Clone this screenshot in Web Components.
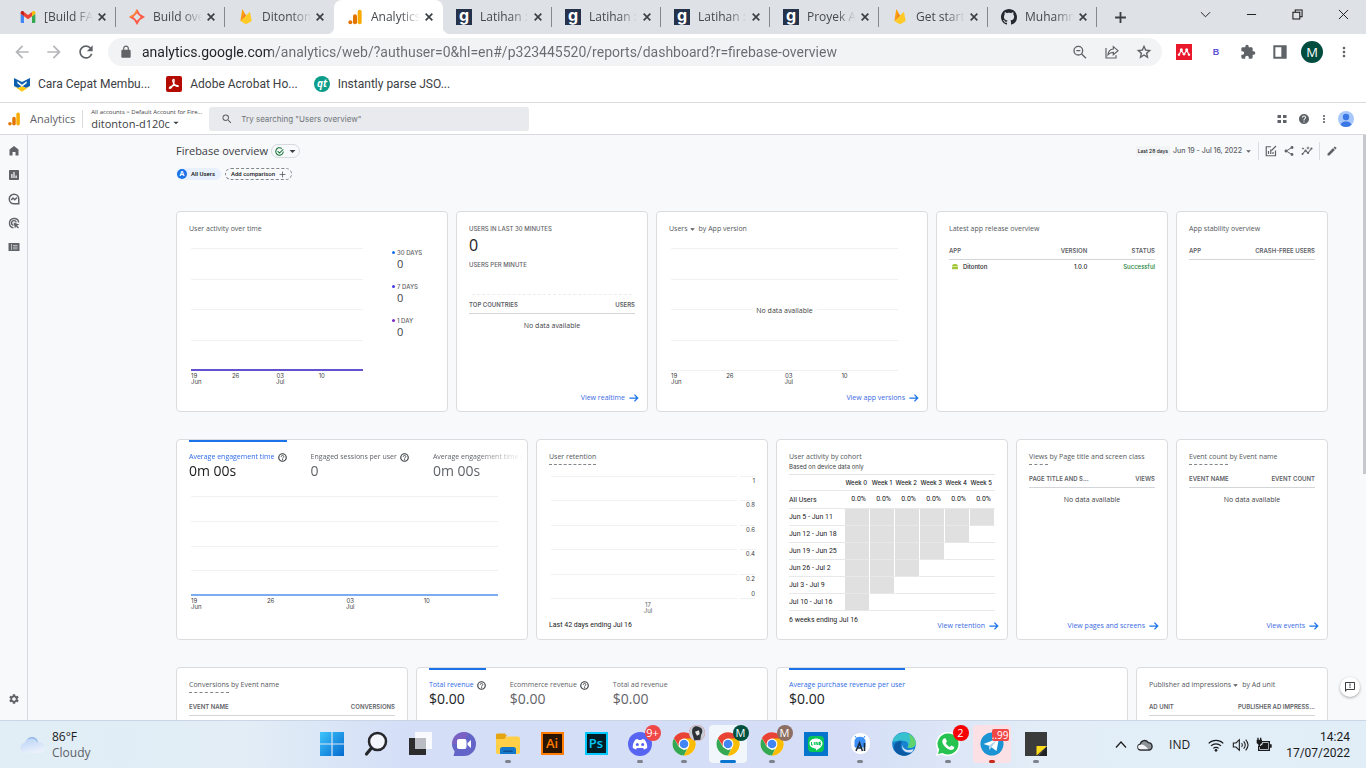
<!DOCTYPE html>
<html lang="en">
<head>
<meta charset="utf-8">
<title>Analytics</title>
<style>
  html, body { margin: 0; height: 100%; }
  body { overflow: hidden; background: #f8f9fb; color: #3c4043; font-family: "Open Sans", "Noto Sans", sans-serif; }
</style>
</head>
<body>
<desktop-shell></desktop-shell>
<script>
const define = (tag, css, html) => customElements.define(tag, class extends HTMLElement {
  constructor() { super(); this.attachShadow({ mode: 'open' }); }
  connectedCallback() {
    this.shadowRoot.innerHTML = `<style>*{box-sizing:border-box}button{font:inherit;color:inherit;background:none;border:0;padding:0;margin:0}a{color:inherit;text-decoration:none}${css}</style>` + (typeof html === 'function' ? html(this) : html);
  }
});
const attr = (el, name, fallback = '') => el.getAttribute(name) || fallback;
const P = d => `<path fill="currentColor" d="${d}"/>`;
const S = (d, w = 2) => `<path fill="none" stroke="currentColor" stroke-width="${w}" d="${d}"/>`;
const CHROME = `<circle cx="12" cy="12" r="11.500" fill="#fff"/><path fill="#e94335" d="M12 12 2 6.300A11.500 11.500 0 0 1 22 6.300z"/><path fill="#fbbc04" d="M12 12 22 6.300A11.500 11.500 0 0 1 12 23.500L17 14z"/><path fill="#34a853" d="M12 23.500A11.500 11.500 0 0 1 2 6.300L7 15l5 3 3-1z"/><path fill="#e94335" d="M12 6.500h10A11.500 11.500 0 0 0 2 6.300l5 8z"/><path fill="#fbbc04" d="M12 6.500h10.100A11.500 11.500 0 0 1 12 23.500l5-8.700z"/><circle cx="12" cy="12" r="5.400" fill="#fff"/><circle cx="12" cy="12" r="4.300" fill="#4285f4"/>`;
const FIREBASE = `<path fill="#ffa000" d="M3.500 18 6.300 1.200c.1-.5.700-.6 1-.2L10 6.300z"/><path fill="#f57f17" d="m13.800 13-3.900-7L3.500 18z"/><path fill="#ffca28" d="M20.500 18 18.100 5.200c-.1-.6-.7-.7-1-.3L3.500 18l7.600 4.400c.5.300 1.300.3 1.800 0z"/>`;
const GA = `<rect x="16" y="1" width="6" height="22" rx="3" fill="#f9ab00"/><rect x="9" y="8" width="6" height="15" rx="3" fill="#e37400"/><circle cx="5" cy="20" r="3" fill="#e37400"/>`;
const ICONS = {
  gmail: `<path fill="#4285f4" d="M1 20V7l5 3.800V21H2.500C1.700 21 1 20.600 1 20z"/><path fill="#34a853" d="M18 21V10.800L23 7v13c0 .6-.7 1-1.500 1z"/><path fill="#ea4335" d="M6 11V4.500l6 4.500 6-4.500V11l-6 4.500z"/><path fill="#c5221f" d="M1 7V5.300C1 3 3.500 2.300 5 3.400L6 4.200V11z"/><path fill="#fbbc04" d="M23 7V5.300C23 3 20.500 2.300 19 3.400l-1 .8V11z"/>`,
  dicoding: `<path fill="#ff5a45" d="m12 0 4.500 7.500L24 12l-7.500 4.500L12 24l-4.500-7.500L0 12l7.500-4.500z"/><path fill="#ff9233" d="M0 12l7.500-4.500L12 0v5L5 12z"/><path fill="#dee1e6" d="m12 6.500 5.500 5.500-5.500 5.500L6.500 12z"/>`,
  firebase: FIREBASE, ga: GA,
  github: `<g transform="scale(1.500)"><path fill="#24292f" d="M8 0C3.580 0 0 3.580 0 8c0 3.540 2.290 6.530 5.470 7.590.4.070.55-.17.55-.38 0-.19-.01-.82-.01-1.490-2.010.37-2.530-.49-2.690-.94-.09-.23-.48-.94-.82-1.130-.28-.15-.68-.52-.01-.53.63-.01 1.080.58 1.230.82.72 1.210 1.870.87 2.330.66.07-.52.28-.87.510-1.070-1.780-.2-3.640-.89-3.640-3.950 0-.87.31-1.590.82-2.150-.08-.2-.36-1.020.08-2.120 0 0 .67-.21 2.200.82.64-.18 1.320-.27 2-.27s1.360.09 2 .27c1.530-1.040 2.200-.82 2.200-.82.44 1.100.16 1.920.08 2.120.51.56.82 1.270.82 2.150 0 3.070-1.870 3.750-3.650 3.950.29.25.54.73.54 1.480 0 1.070-.01 1.930-.01 2.200 0 .21.15.46.55.38A8.010 8.010 0 0 0 16 8c0-4.420-3.580-8-8-8z"/></g>`,
  glints: `<path fill="#25324b" d="M0 0h24v24H0z"/><text x="12" y="18" text-anchor="middle" font-family="Inter" font-weight="700" font-size="24" fill="#fff">g</text>`,
  back: P('M20 11H7.830l5.590-5.590L12 4l-8 8 8 8 1.410-1.410L7.830 13H20v-2z'),
  forward: P('M12 4l-1.410 1.410L16.170 11H4v2h12.170l-5.580 5.590L12 20l8-8z'),
  reload: P('M17.650 6.350A7.958 7.958 0 0012 4c-4.420 0-7.990 3.580-7.990 8s3.570 8 7.990 8c3.730 0 6.840-2.550 7.730-6h-2.080A5.990 5.990 0 0112 18c-3.310 0-6-2.690-6-6s2.690-6 6-6c1.660 0 3.140.69 4.220 1.780L13 11h7V4l-2.350 2.350z'),
  lock: P('M18 8h-1V6c0-2.760-2.240-5-5-5S7 3.240 7 6v2H6c-1.100 0-2 .9-2 2v10c0 1.100.9 2 2 2h12c1.100 0 2-.9 2-2V10c0-1.100-.9-2-2-2zM9 6c0-1.660 1.340-3 3-3s3 1.340 3 3v2H9V6z'),
  search: P('M15.500 14h-.79l-.28-.27A6.471 6.471 0 0016 9.500 6.500 6.500 0 109.500 16c1.610 0 3.090-.59 4.230-1.570l.27.28v.79l5 4.990L20.490 19l-4.990-5zm-6 0C7.010 14 5 11.990 5 9.500S7.010 5 9.500 5 14 7.010 14 9.500 11.990 14 9.500 14z'),
  zoomout: S('M16 10a6.500 6.500 0 1 1-13 0 6.500 6.500 0 0 1 13 0zM14.500 15l6.500 6.500M6.500 10h6', 2),
  sharepage: S('M3 6v15h15v-4M14 4l7 6-7 6v-3.500c-4 0-6 1-8 3.500.5-5 3-8 8-8.500z', 1.8),
  star: P('M23 9l-7.800-.7L12 1 8.800 8.300 1 9l5.900 5.100L5.200 22 12 17.800 18.800 22l-1.700-7.900L23 9zM12 15.400l-3.760 2.270 1-4.280-3.320-2.880 4.380-.38L12 6.100l1.710 4.040 4.380.38-3.320 2.880 1 4.280L12 15.400z'),
  mendeley: `<path fill="#e9182a" d="M0 0h24v24H0z"/><g fill="#fff"><circle cx="8" cy="8.500" r="2.300"/><circle cx="16" cy="8.500" r="2.300"/><circle cx="4.500" cy="16" r="1.800"/><circle cx="12" cy="15.500" r="1.800"/><circle cx="19.500" cy="16" r="1.800"/></g><path fill="none" stroke="#fff" stroke-width="1.800" d="M4.500 16c2-1 .5-5 3.500-5s2 4 4 4.500c2-.5 1-4.500 4-4.500s1.500 4 3.500 5"/>`,
  puzzle: P('M20.500 11H19V7c0-1.100-.9-2-2-2h-4V3.500a2.500 2.500 0 00-5 0V5H4c-1.100 0-1.990.9-1.990 2v3.800H3.500c1.490 0 2.700 1.210 2.700 2.700s-1.210 2.700-2.700 2.700H2V20c0 1.100.9 2 2 2h3.800v-1.500c0-1.490 1.210-2.700 2.700-2.700s2.700 1.210 2.700 2.700V22H17c1.100 0 2-.9 2-2v-4h1.500a2.500 2.500 0 000-5z'),
  panel: P('M2 2h20v20H2zM5 5v14h9V5z').replace('<path', '<path fill-rule="evenodd"'),
  dots: P('M12 8c1.100 0 2-.9 2-2s-.9-2-2-2-2 .9-2 2 .9 2 2 2zm0 2c-1.100 0-2 .9-2 2s.9 2 2 2 2-.9 2-2-.9-2-2-2zm0 6c-1.100 0-2 .9-2 2s.9 2 2 2 2-.9 2-2-.9-2-2-2z'),
  plus: S('M12 2v20M2 12h20', 3.4), thinplus: S('M12 2v20M2 12h20', 3),
  close: S('M4 4l16 16M20 4L4 20', 4),
  wdown: S('M2 7l10 10L22 7', 2), wmin: S('M2 12h20', 2), wmax: S('M2 7h15v15H2zM7 7V2h15v15h-5', 2.2), wclose: S('M2 2l20 20M22 2L2 22', 2),
  mbook: `<path fill="#0b5fae" d="M0 3l12 6 12-6v12l-6 3-6-3-6 3-6-3z"/><path fill="#fff" d="M5 8l7 5 7-5v3l-7 5-7-5z"/><path fill="#fcc914" d="M1 16l5 2 6-2.500 6 2.500 5-2-11 7.500z"/>`,
  acrobat: `<rect width="24" height="24" rx="3" fill="#b30b00"/><path fill="none" stroke="#fff" stroke-width="1.800" d="M10.500 5.500c2-1.500 2 1 1.500 4-1 4-4 9-6 9s-1-2 3-3.500 9-1.500 9.500-.2-2.500 1.500-5-1.300-4-6.500-3-8z"/>`,
  qt: `<circle cx="12" cy="12" r="12" fill="#0b9d8a"/><text x="12" y="17" text-anchor="middle" font-family="Open Sans" font-style="italic" font-weight="700" font-size="15" fill="#fff">qt</text>`,
  caret: P('M4 8h16l-8 8z'),
  apps: P('M3 4h7v6H3zM14 4h7v6h-7zM3 14h7v6H3zM14 14h7v6h-7z'),
  helpfill: P('M12 2C6.480 2 2 6.480 2 12s4.480 10 10 10 10-4.480 10-10S17.520 2 12 2zm1 17h-2v-2h2v2zm2.070-7.750l-.9.92C13.450 12.900 13 13.500 13 15h-2v-.5c0-1.100.45-2.100 1.170-2.830l1.240-1.260c.37-.36.59-.86.59-1.410 0-1.100-.9-2-2-2s-2 .9-2 2H8c0-2.210 1.790-4 4-4s4 1.790 4 4c0 .88-.36 1.680-.93 2.250z'),
  help: `<circle cx="12" cy="12" r="10" fill="none" stroke="currentColor" stroke-width="3.200"/>` + S('M8.500 10c0-5 7-4.500 7-.5 0 2.500-3.300 2.500-3.300 5.500', 2.4) + P('M10.800 16.500h2.800v2.500h-2.800z'),
  avatar: `<clipPath id="c"><circle cx="12" cy="12" r="12"/></clipPath><g clip-path="url(#c)"><path fill="#a8c7fa" d="M0 0h24v24H0z"/><circle cx="12" cy="9" r="4.800" fill="#3b78e7"/><path fill="#3b78e7" d="M3 24c0-11 18-11 18 0z"/></g>`,
  home: P('M3 21V9l9-7 9 7v12h-6v-7H9v7z'),
  report: P('M20 2H4c-1.100 0-2 .9-2 2v16c0 1.100.9 2 2 2h16c1.100 0 2-.9 2-2V4c0-1.100-.9-2-2-2zM9 18H6.500v-8H9zm4.200 0h-2.400V6h2.400zm4.300 0H15v-5h2.500z'),
  explore: S('M12 2.500a9.500 9.500 0 1 0 0 19h9.500V12A9.500 9.500 0 0 0 12 2.500zM6.500 14l3.500-4 3.500 3.500L18 9', 3),
  target: S('M21.500 11a9.300 9.300 0 1 0-10.500 10.500M16.500 11a4.700 4.700 0 1 0-5.500 5.500', 2.8) + P('M11 11l12 4-5 2 4 4-2 2-4-4-2 4z'),
  library: P('M1 4h22v16H1z') + '<path fill="#d7d9dd" d="M6 6h1.500v12H6zM10 8h9v1.500h-9zM10 11.500h9V13h-9zM10 15h9v1.500h-9z"/>',
  gear: P('M19.140 12.940c.04-.3.060-.61.060-.94 0-.32-.02-.64-.07-.94l2.030-1.580a.49.49 0 00.12-.61l-1.920-3.320a.488.488 0 00-.59-.22l-2.390.96c-.5-.38-1.030-.7-1.620-.94l-.36-2.540a.484.484 0 00-.48-.41h-3.840c-.24 0-.43.17-.47.41l-.36 2.540c-.59.24-1.130.57-1.620.94l-2.390-.96c-.22-.08-.47 0-.59.22L2.740 8.870c-.12.21-.08.47.12.61l2.030 1.580c-.05.3-.09.63-.09.94s.02.64.07.94l-2.030 1.580a.49.49 0 00-.12.61l1.920 3.320c.12.22.37.29.59.22l2.390-.96c.5.38 1.030.7 1.620.94l.36 2.540c.05.24.24.41.48.41h3.840c.24 0 .44-.17.47-.41l.36-2.540c.59-.24 1.130-.56 1.620-.94l2.390.96c.22.080.47 0 .59-.22l1.920-3.320c.12-.22.070-.47-.12-.61l-2.010-1.580zM12 15.600c-1.980 0-3.600-1.620-3.600-3.600s1.620-3.600 3.600-3.600 3.600 1.620 3.600 3.600-1.620 3.600-3.600 3.600z'),
  check: S('M22 12a10 10 0 1 1-4-8M7 11l5 5L22 6', 2.8),
  custom: S('M21 11v10.500H2.500v-18H12M7 18v-6M11.500 18V9M16 18v-4M13 11l9-9', 2.4),
  share: P('M18 16.080c-.76 0-1.440.3-1.960.77L8.910 12.700c.05-.23.090-.46.090-.7s-.04-.47-.09-.7l7.050-4.110c.54.5 1.250.81 2.040.81 1.660 0 3-1.340 3-3s-1.340-3-3-3-3 1.340-3 3c0 .24.040.47.090.7L8.040 9.810C7.500 9.310 6.790 9 6 9c-1.660 0-3 1.340-3 3s1.340 3 3 3c.79 0 1.500-.31 2.040-.81l7.120 4.160c-.05.21-.08.43-.08.65 0 1.610 1.310 2.920 2.920 2.920s2.920-1.310 2.920-2.920-1.310-2.920-2.920-2.920z'),
  insights: S('M3 18l6-7 5 5 7-9', 2.2) + P('M3 16a2 2 0 1 0 .1 4 2 2 0 0 0 0-4zM9 9a2 2 0 1 0 .1 4A2 2 0 0 0 9 9zM14 14a2 2 0 1 0 .1 4 2 2 0 0 0 0-4zM21 5a2 2 0 1 0 .1 4 2 2 0 0 0 0-4zM14 2l1 3 3 1-3 1-1 3-1-3-3-1 3-1zM4 4l.8 2.200L7 7l-2.200.8L4 10l-.8-2.200L1 7l2.200-.8z'),
  edit: P('M3 17.250V21h3.750L17.810 9.940l-3.750-3.750L3 17.250zM20.710 7.040a1 1 0 000-1.410l-2.340-2.340a1 1 0 00-1.410 0l-1.830 1.830 3.750 3.750 1.830-1.830z'),
  arrow: S('M1 12h20M13 4l8 8-8 8', 3),
  android: '<path fill="#a4c639" d="M2 10c0-9 20-9 20 0zM2 12h20v9H2z"/>',
  feedback: P('M20 2H4c-1.100 0-1.990.9-1.990 2L2 22l4-4h14c1.100 0 2-.9 2-2V4c0-1.100-.9-2-2-2zm0 14H5.200L4 17.200V4h16v12zM11 5h2v6h-2zM11 12h2v2h-2z'),
  weather: `<defs><linearGradient id="w" x2=".4" y2="1"><stop stop-color="#b9d2f6"/><stop offset="1" stop-color="#e9f0fb"/></linearGradient></defs><circle cx="12" cy="10" r="6" fill="#86aee2"/><path fill="url(#w)" d="M5 20a5 5 0 0 1-.5-9.900A7 7 0 0 1 17.500 9.500 5.500 5.500 0 1 1 18 20z"/>`,
  windows: `<defs><linearGradient id="g" x2="1" y2="1"><stop stop-color="#3cc5fb"/><stop offset="1" stop-color="#0569cf"/></linearGradient></defs><path fill="url(#g)" d="M0 0h11.400v11.400H0zM12.600 0H24v11.400H12.600zM0 12.600h11.400V24H0zM12.600 12.600H24V24H12.600z"/>`,
  tsearch: `<path fill="#f3f6fa" stroke="#25272b" stroke-width="2.500" d="M22 9.500a8.500 8.500 0 1 1-17 0 8.500 8.500 0 0 1 17 0z"/><path stroke="#25272b" stroke-width="3.200" stroke-linecap="round" d="M7.500 16l-5 6"/>`,
  taskview: `<path fill="#2c2c2c" d="M1 6h17v17H1z"/><path fill="#fff" opacity=".85" d="M7 0h17v17H7z"/><path fill="#b9bcc2" d="M7 6h11v11H7z"/>`,
  chat: `<path fill="#6264c7" d="M12 0a12 12 0 0 1 0 24H1.500l1.200-4.500A12 12 0 0 1 12 0z"/><path fill="#8a5fc0" opacity=".6" d="M12 0A12 12 0 0 0 0 12C6 13 15 8 16 1A12 12 0 0 0 12 0z"/><rect x="5" y="7" width="9.500" height="10" rx="2" fill="#fff"/><path fill="#fff" d="M15.500 11L19 8v8l-3.500-3z"/>`,
  folder: `<path fill="#e5a513" d="M0 3c0-1 .5-1.500 1.500-1.500H9L11 4h-1v6H0z"/><path fill="#ffcf48" d="M0 7h8l3-2.500h11c1.300 0 2 .7 2 2V20c0 1.300-.7 2-2 2H2c-1.300 0-2-.7-2-2z"/><path fill="#1276c9" d="M4 22v-4.500C4 16 5 15 6.500 15h11c1.500 0 2.500 1 2.500 2.500V22z"/><path fill="#0b4f92" d="M7.500 18.500h9V20h-9z"/>`,
  ai: `<rect x="2" y="1" width="21" height="21" fill="#2a1500" stroke="#ff7c00" stroke-width="2"/><text x="12" y="16" text-anchor="middle" font-family="Open Sans" font-weight="600" font-size="13" fill="#ff7c00">Ai</text>`,
  ps: `<rect x="2" y="1" width="21" height="21" fill="#001d26" stroke="#00c8ff" stroke-width="2"/><text x="12" y="16" text-anchor="middle" font-family="Open Sans" font-weight="600" font-size="13" fill="#00c8ff">Ps</text>`,
  discord: `<circle cx="12" cy="12" r="12" fill="#5865f2"/><path fill="#fff" d="M7.500 7.500L10 7l.5 1h3l.5-1 2.500.5c2 2.500 3 5.500 2.700 8.500l-3.200 1.500-1-1.500h-6l-1 1.500L4.800 16c-.3-3 .7-6 2.700-8.500z"/><circle cx="9.300" cy="12.500" r="1.500" fill="#5865f2"/><circle cx="14.700" cy="12.500" r="1.500" fill="#5865f2"/>`,
  chrome: CHROME,
  portrait: `<circle cx="12" cy="12" r="12" fill="#c9cdd4"/><path fill="#2d3138" d="M5 13C3 3 10 0 15 3c6 1 6 8 3 12l-1 7-9 1z"/><path fill="#e8e4e2" d="M9 10l6-2 1 6-4 2z"/>`,
  line: `<path fill="#0574cd" d="M0 0h24v24H0z"/><rect x="4" y="4" width="16" height="16" rx="4" fill="#06c755"/><path fill="#fff" d="M12 6.500c4 0 6.500 2.200 6.500 5 0 3.200-4 5.500-6.500 7 .4-1.500 0-2-.8-2.100-3.200-.4-5.700-2.200-5.700-4.900 0-2.800 2.500-5 6.500-5z"/><path fill="none" stroke="#06c755" d="M7.500 10v3h1.300M10.300 10v3M12 13v-3l2 3v-3M17 10h-1.500v3H17M15.500 11.500H17"/>`,
  studio: `<rect x="3" y="1" width="19" height="21" rx="9" fill="#fff"/><path fill="#3a8ef5" d="M7 9c0-5 10-5 10 0v6H7zM7 4l2 3M17 4l-2 3" stroke="#3a8ef5"/><path fill="none" stroke="#1c2d3c" stroke-width="1.600" d="M8 19l3.500-8 3 8M16.500 11v8M9.500 16h4"/>`,
  edge: `<circle cx="12" cy="12" r="11.800" fill="#1682d0"/><path fill="#37c1ce" d="M.5 10C2-1 19-3.500 23.500 9c1.500 5.500-3.500 8.500-8 6.500 1.500-1.500 1-5.500-2.500-6.500-4-1-8-.5-12.500 1z"/><path fill="#5fd46e" d="M17 2c6 3 8.500 9 5.500 12-2 2.200-5.500 2-7 1.500 3-4 3-9 1.500-13.500z"/><path fill="#0c59a4" d="M9 12c-1.500 6 4 10.500 11 8.300C14 27 2 23 2 15c0-4 4-6.500 8-5.500-.5.700-.8 1.500-1 2.500z"/><path fill="#d8e2f7" d="M10.500 13c0 4 5 6.500 11 4-.5 2-1 2.500-2 3.200C14 21.500 9 18 10.500 13z"/>`,
  whatsapp: `<path fill="#fff" d="M12 0a12 12 0 1 1-6 22.400L0 24l1.600-6A12 12 0 0 1 12 0z"/><path fill="#26c351" d="M12 1.500a10.500 10.500 0 1 1-5.500 19.400L2 22l1.200-4.400A10.500 10.500 0 0 1 12 1.500z"/><path fill="#fff" d="M8 6.500l1.500-.2 1.500 3.200-1.200 1.600c1 2 2 3 4 3.900l1.500-1.600 3 1.600c0 2.500-2 3.200-3.700 3C10.500 17.300 6.300 12.500 6.300 9.500c0-1.500.7-2.500 1.700-3z"/>`,
  telegram: `<circle cx="12" cy="12" r="11.500" fill="#1c93d3"/><path fill="#fff" d="M3.500 12L19 6l-2.500 13-5-3.700-2.300 2.400-.2-4z"/><path fill="#a9d2ee" d="M9 13.700l8-6-5.500 7.300-2.300 2.700z"/>`,
  notes: `<path fill="#3b3b3b" d="M1 0h22v14l-9 10H1z"/><path fill="#232323" d="M14 24h9V14z"/><path fill="#ffdb1a" d="M12.500 14H23l-10.500 9.500z"/>`,
  up: S('M2 17L12 6l10 11', 2.4),
  onedrive: `<path fill="#8e9299" stroke="#26282c" stroke-width="2" d="M5.500 19.500a4.500 4.500 0 0 1-.5-8.900A6.500 6.500 0 0 1 17 8.500a5.600 5.600 0 0 1 1.500 11z"/><path fill="#f2f4f7" d="M5 18.500a3.500 3.500 0 0 1 0-7c4-1 8 2 12 7z"/>`,
  wifi: S('M1 9.500c6-6 16-6 22 0M4.500 13.300c4-4 11-4 15 0M8 17c2-2 6-2 8 0', 1.7) + '<circle cx="12" cy="20" r="2" fill="currentColor"/>',
  sound: S('M2 9h4l5-5v16l-5-5H2zM14.500 9c1.500 2 1.500 4 0 6M17.500 6.500c3 3.500 3 7.500 0 11M20.500 4c4.500 5 4.500 11 0 16', 1.6),
  battery: `<path fill="none" stroke="currentColor" stroke-width="2" d="M8 7h12v13H4v-7"/><path fill="currentColor" d="M10 9h8v9H6v-4l4-3zM21 11h2.500v5H21zM2 1h2v3h2V1h2v3h1v5l-3 3v3H4v-3L1 9V4h1z"/>`
};
define('ui-icon', `:host{display:inline-flex;flex:none;width:16px;height:16px}svg{width:100%;height:100%;display:block;overflow:visible}`,
  el => `<svg viewBox="0 0 24 24" aria-hidden="true">${ICONS[attr(el, 'name')]}</svg>`);

/* ---------- browser ---------- */
define('browser-tab', `
  :host{display:flex;flex:0 1 109px;min-width:0;height:34px;align-items:center;padding:0 9px 0 13px;position:relative;font-size:12px;color:#45484d}
  :host::after{content:"";position:absolute;right:0;top:7px;width:1px;height:20px;background:#84878c}
  :host([plain])::after{display:none}
  :host([active]){background:#fff;border-radius:8px 8px 0 0}
  :host([active])::after{display:none}
  :host([active])::before{content:"";position:absolute;left:-8px;right:-8px;bottom:0;height:8px;background:radial-gradient(circle at 0 0,transparent 8px,#fff 9px) left/8px 8px no-repeat,radial-gradient(circle at 100% 0,transparent 8px,#fff 9px) right/8px 8px no-repeat}
  .t{flex:1;min-width:0;height:18px;line-height:18px;overflow:hidden;white-space:nowrap;margin:0 4px 0 8px;text-align:left;-webkit-mask-image:linear-gradient(90deg,#000 60%,transparent)}
  .x ui-icon{width:10px;height:10px;color:#3c4043}.x{display:flex}`,
  el => `<ui-icon name="${attr(el, 'icon')}"></ui-icon><button class="t"><slot></slot></button><button class="x" aria-label="Close tab"><ui-icon name="close"></ui-icon></button>`);
define('bookmark-link', `:host{display:block;flex:none}a{display:flex;align-items:center;gap:8px;font:12px/18px Roboto;color:#3c4043}`,
  el => `<a href="#"><ui-icon name="${attr(el, 'icon')}"></ui-icon><slot></slot></a>`);
define('browser-chrome', `
  :host{display:block;background:#fff;border-bottom:1px solid #d8dade}
  .strip{display:flex;background:#dee1e6;height:34px;padding-left:7px}
  .new{width:46px;display:grid;place-items:center}.new ui-icon{width:13px;height:13px;color:#3c4043}
  .win{margin-left:auto;display:flex;height:28px;color:#111}.win button{width:46px;display:grid;place-items:center}.win ui-icon{width:11px;height:11px}
  .bar{display:flex;align-items:center;height:36px;padding:0 6px;color:#5f6368}
  .bar button{width:32px;height:32px;display:grid;place-items:center;flex:none}
  .nav ui-icon{width:20px;height:20px}.off{color:#b4b6b9}.nav{display:flex}
  .omni{flex:1;display:flex;align-items:center;height:28px;border-radius:14px;background:#f1f3f4;margin:0 6px;padding:0 2px 0 11px;min-width:0}
  .omni label{display:flex}.omni label ui-icon{width:14px;height:14px}
  input{flex:1;min-width:0;border:0;padding:0 0 0 9px;height:24px;font:14px Roboto;color:#55585c;-webkit-text-fill-color:transparent;background:linear-gradient(90deg,#202124 139px,#686b70 139px);-webkit-background-clip:text;background-clip:text}
  .b{font:700 9px "Liberation Sans";color:#5b50d8}
  .me{width:22px;height:22px;border-radius:50%;background:#004d40;color:#fff;font-size:13px;display:grid;place-items:center}
  .marks{display:flex;gap:16px;height:32px;padding:0 14px 4px;align-items:center}`, `
  <div class="strip" role="tablist">
    <browser-tab icon="gmail">[Build FA</browser-tab><browser-tab icon="dicoding">Build ove</browser-tab><browser-tab icon="firebase" plain>Ditonton</browser-tab>
    <browser-tab icon="ga" active>Analytics</browser-tab><browser-tab icon="glints">Latihan :</browser-tab><browser-tab icon="glints">Latihan :</browser-tab>
    <browser-tab icon="glints">Latihan :</browser-tab><browser-tab icon="glints">Proyek A</browser-tab><browser-tab icon="firebase">Get start</browser-tab><browser-tab icon="github">Muhamm</browser-tab>
    <button class="new" aria-label="New tab"><ui-icon name="plus"></ui-icon></button>
    <div class="win"><button aria-label="Search tabs"><ui-icon name="wdown"></ui-icon></button><button aria-label="Minimize"><ui-icon name="wmin"></ui-icon></button><button aria-label="Restore"><ui-icon name="wmax"></ui-icon></button><button aria-label="Close"><ui-icon name="wclose"></ui-icon></button></div>
  </div>
  <div class="bar">
    <div class="nav"><button class="off" aria-label="Back"><ui-icon name="back"></ui-icon></button><button class="off" aria-label="Forward"><ui-icon name="forward"></ui-icon></button><button aria-label="Reload"><ui-icon name="reload"></ui-icon></button></div>
    <div class="omni"><label for="url"><ui-icon name="lock"></ui-icon></label><input id="url" aria-label="Address" value="analytics.google.com/analytics/web/?authuser=0&amp;hl=en#/p323445520/reports/dashboard?r=firebase-overview">
      <button aria-label="Zoom"><ui-icon name="zoomout"></ui-icon></button><button aria-label="Share"><ui-icon name="sharepage"></ui-icon></button><button aria-label="Bookmark"><ui-icon name="star"></ui-icon></button></div>
    <button aria-label="Mendeley"><ui-icon name="mendeley"></ui-icon></button><button class="b">B</button><button aria-label="Extensions"><ui-icon name="puzzle"></ui-icon></button><button aria-label="Side panel"><ui-icon name="panel"></ui-icon></button><button><span class="me">M</span></button><button aria-label="Menu"><ui-icon name="dots"></ui-icon></button>
  </div>
  <div class="marks"><bookmark-link icon="mbook">Cara Cepat Membu...</bookmark-link><bookmark-link icon="acrobat">Adobe Acrobat Ho...</bookmark-link><bookmark-link icon="qt">Instantly parse JSO...</bookmark-link></div>`);

/* ---------- analytics frame ---------- */
define('ga-header', `
  :host{display:flex;align-items:center;height:32px;background:#fff;border-bottom:1px solid #d8dade;padding:0 12px 0 7px;color:#5f6368}
  .logo{width:14px;height:14px}.brand{font-size:11px;line-height:16px;margin:0 7px 0 9px}
  .acc{border-left:1px solid #dadce0;padding-left:8px;width:119px;flex:none;text-align:left;height:18px;display:flex;flex-direction:column;justify-content:center}
  .acc small{display:block;font-size:6px;line-height:9px;color:#3c4043;white-space:nowrap}.acc b{font-weight:400;font-size:11px;line-height:13px;color:#3c4043;display:flex;align-items:center;gap:2px}.acc b ui-icon{width:8px;height:8px}
  label{display:flex;align-items:center;gap:8px;width:320px;height:24px;background:#e8eaed;border-radius:3px;padding:0 12px;margin-left:8px}label ui-icon{width:12px;height:12px}
  input{flex:1;border:0;background:none;padding:0;font:8px Inter;color:#5f6368}input::placeholder{color:#70757a;opacity:1}
  .r{margin-left:auto;display:flex;align-items:center;gap:10px}.r button{display:flex}.r ui-icon{width:12px;height:12px}.r .dots{margin:0 -2px}.r .av{width:16px;height:16px}`, `
  <ui-icon class="logo" name="ga"></ui-icon><span class="brand">Analytics</span>
  <button class="acc"><small>All accounts &gt; Default Account for Fire...</small><b>ditonton-d120c <ui-icon name="caret"></ui-icon></b></button>
  <label><ui-icon name="search"></ui-icon><input type="search" aria-label="Search" placeholder='Try searching "Users overview"'></label>
  <div class="r"><button aria-label="Apps"><ui-icon name="apps"></ui-icon></button><button aria-label="Help"><ui-icon name="helpfill"></ui-icon></button><button class="dots" aria-label="More"><ui-icon name="dots"></ui-icon></button><button aria-label="Account"><ui-icon class="av" name="avatar"></ui-icon></button></div>`);
define('side-nav', `
  :host{display:flex;flex-direction:column;align-items:center;gap:12px;width:28px;flex:none;border-right:1px solid #d8dade;padding:10px 0 15px;color:#5f6368}
  a{display:flex}ui-icon{width:12px;height:12px}.end{margin-top:auto}`, `
  <a href="#" aria-label="Home"><ui-icon name="home"></ui-icon></a><a href="#" aria-label="Reports"><ui-icon name="report"></ui-icon></a><a href="#" aria-label="Explore"><ui-icon name="explore"></ui-icon></a><a href="#" aria-label="Advertising"><ui-icon name="target"></ui-icon></a><a href="#" aria-label="Library"><ui-icon name="library"></ui-icon></a><a class="end" href="#" aria-label="Admin"><ui-icon name="gear"></ui-icon></a>`);
define('report-header', `
  :host{display:grid;grid-template-columns:1fr auto;row-gap:10px;color:#3c4043}
  .l{display:flex;align-items:center;gap:3px;height:14px}h1{font-size:11px;font-weight:400;line-height:14px;margin:0}
  .pill{display:flex;align-items:center;gap:4px;height:14px;width:29px;justify-content:center;border:1px solid #d5d8dc;border-radius:7px}.pill ui-icon{width:9px;height:9px}.pill ui-icon:first-child{color:#137333}
  .r{display:flex;align-items:center;gap:6px;height:14px;font:500 7px/10px Inter;color:#5f6368}.r button{display:flex;align-items:center;gap:3px}.r ui-icon{width:12px;height:12px}.r ui-icon.c{width:7px;height:7px}
  .tag{font-size:5px;background:#f1f3f4;color:#202124;padding:0 2px}.sep{width:1px;height:18px;background:#dadce0}
  .chips{display:flex;gap:4px;height:12px;font:500 6px/12px Roboto;color:#111}.chips button{display:flex;align-items:center;height:12px;border-radius:6px}
  .all{background:#e8f0fe;padding:0 6px 0 1px;gap:4px}.all i{font:700 7px/10px "Open Sans";width:10px;height:10px;border-radius:50%;background:#1a73e8;color:#fff;text-align:center}
  .add{border:1px dashed #80868b;padding:0 5px;gap:4px;color:#202124}.add ui-icon{width:7px;height:7px;color:#5f6368}`, `
  <div class="l"><h1>Firebase overview</h1><button class="pill" aria-label="Data status"><ui-icon name="check"></ui-icon><ui-icon name="caret"></ui-icon></button></div>
  <div class="r"><button><span class="tag">Last 28 days</span><span>Jun 19 - Jul 16, 2022</span><ui-icon class="c" name="caret"></ui-icon></button><span class="sep"></span><button aria-label="Customize"><ui-icon name="custom"></ui-icon></button><button aria-label="Share"><ui-icon name="share"></ui-icon></button><button aria-label="Insights"><ui-icon name="insights"></ui-icon></button><span class="sep"></span><button aria-label="Edit"><ui-icon name="edit"></ui-icon></button></div>
  <div class="chips"><button class="all"><i>A</i>All Users</button><button class="add">Add comparison <ui-icon name="thinplus"></ui-icon></button></div>`);

/* ---------- cards ---------- */
define('ga-card', `
  :host{display:flex;flex-direction:column;min-width:0;background:#fff;border:1px solid #dadce0;border-radius:4px;padding:12px 8px 8px 12px;overflow:hidden;color:#5f6368;font:7px/10px "Open Sans"}
  :host([tabs]){padding-top:0}
  h2{font:inherit;font-weight:500;color:#54585d;margin:0;display:flex;white-space:pre}
  h2 .u{border-bottom:1px dashed #80868b;margin-bottom:-3px;padding-bottom:2px}h2 ui-icon{width:7px;height:7px;margin:2px 3px 0 1px}
  .body{flex:1;margin-right:4px;min-width:0}
  .link{display:flex;justify-content:flex-end;align-items:center;gap:4px;color:#3b6ae4;align-self:flex-end;font-weight:500}.link ui-icon{width:10px;height:10px;color:#1a73e8}`,
  el => {
    const metric = attr(el, 'metric'), rest = attr(el, 'heading'), link = attr(el, 'link');
    const head = metric || rest ? `<h2>${metric ? `<span class="${el.hasAttribute('menu') ? '' : 'u'}">${metric}</span>` : ''}${el.hasAttribute('menu') ? '<ui-icon name="caret"></ui-icon>' : ''}${metric && rest && !el.hasAttribute('menu') ? ' ' : ''}${rest}</h2>` : '';
    return `${head}<div class="body"><slot></slot></div>${link ? `<a class="link" href="#">${link} <ui-icon name="arrow"></ui-icon></a>` : ''}`;
  });
define('data-table', `
  :host{display:block;margin-top:12px}
  table{width:100%;border-spacing:0}
  th{font:600 6px/10px Inter;color:#5f6368;text-align:right;padding:0 0 3px;border-bottom:1px solid #d3d5d9;white-space:nowrap}
  th:first-child,td:first-child{text-align:left}
  td{font:500 6px/10px Inter;color:#202124;text-align:right;padding:2px 0 0}
  td.none{text-align:center!important;font:7px/10px "Open Sans";color:#3c4043;padding-top:7px}
  td:first-child ui-icon{width:8px;height:7px;margin:0 4px 0 2px;vertical-align:-1px}
  .ok{color:#188038}`,
  el => {
    const cols = attr(el, 'columns').split('|'), row = attr(el, 'row');
    const body = row ? `<tr>${row.split('|').map((c, i, a) => `<td class="${i && i === a.length - 1 ? 'ok' : ''}">${i ? '' : '<ui-icon name="android"></ui-icon>'}${c}</td>`).join('')}</tr>`
      : el.hasAttribute('empty') ? `<tr><td class="none" colspan="${cols.length}">No data available</td></tr>` : '';
    return `<table><thead><tr>${cols.map(c => `<th scope="col">${c}</th>`).join('')}</tr></thead><tbody>${body}</tbody></table>`;
  });
define('time-chart', `
  :host{display:block;flex:1;min-width:0;margin:14px 0 0;padding:0 17px 0 2px}
  :host([tight]){padding-right:0}
  .plot{height:123px;display:flex;flex-direction:column;justify-content:space-between;position:relative}
  :host([short]) .plot{height:100px}:host([short]){margin-top:16px}
  .plot i{height:1px;background:#f1f1f3}
  .line{position:absolute;left:0;right:0;bottom:0;height:2px;background:var(--line,transparent)}
  .plot p{position:absolute;left:50%;top:50%;margin:-4px 0 0 -32px;width:64px;background:#fff;text-align:center;line-height:10px;color:#3c4043}
  .x{display:grid;grid-template-columns:7fr 14fr 14fr 14fr 5fr;font:6px/6px Inter;color:#3c4043;padding-top:2px;text-align:center}
  .x span:first-child{text-align:left}.x span:nth-child(4){padding-right:6px}`,
  el => `<div class="plot"><i></i><i></i><i></i><i></i><i></i><div class="line"></div>${el.hasAttribute('empty') ? '<p>No data available</p>' : ''}</div>
  <div class="x"><span>19<br>Jun</span><span>26</span><span>03<br>Jul</span><span>10</span></div>`);
define('day-legend', `
  :host{display:flex;flex-direction:column;gap:14px;width:44px;flex:none;padding-top:15px}
  div{font:500 6px/8px Inter;padding-left:6px;position:relative;color:#5f6368}
  div::before{content:"";position:absolute;left:1px;top:2px;width:3px;height:3px;border-radius:50%;background:var(--dot)}
  b{display:block;font:11px/12px "Open Sans";color:#3c4043;padding-top:1px;margin-bottom:-1px}`, `
  <div style="--dot:#1a73e8">30 DAYS<b>0</b></div><div style="--dot:#4a3fe0">7 DAYS<b>0</b></div><div style="--dot:#7b2cc9">1 DAY<b>0</b></div>`);
define('metric-tab', `
  :host{display:block;flex:none;border-top:2px solid transparent;padding-top:10px;white-space:nowrap;text-align:left}
  :host([on]){border-color:#1a73e8}
  button{display:block;text-align:left}
  span{display:flex;align-items:center;gap:3px;line-height:10px}:host([on]) span{color:#2f6be6}
  ui-icon{width:9px;height:9px;color:#3c4043}b{display:block;font-weight:400;font-size:14px;line-height:18px}:host([on]) b{color:#202124}`,
  el => `<button><span>${attr(el, 'label')}${el.hasAttribute('help') ? '<ui-icon name="help"></ui-icon>' : ''}</span><b>${attr(el, 'value')}</b></button>`);
define('metric-row', `:host{display:flex;gap:24px}:host([fade]){margin-right:-12px;-webkit-mask-image:linear-gradient(90deg,#000 85%,transparent 99%)}`, `<slot></slot>`);
define('realtime-panel', `
  :host{display:block;font:500 6px/10px Inter;color:#5f6368}
  b{display:block;font:16px/22px "Open Sans";color:#202124}.dash{height:30px;padding-top:24px}.dash i{display:block;margin:0 3px;border-top:1px dashed #ececee}
  .sub{padding-top:4px}data-table{margin-top:0}`, `
  <div>USERS IN LAST 30 MINUTES</div><b>0</b><div class="sub">USERS PER MINUTE</div><div class="dash"><i></i></div><data-table columns="TOP COUNTRIES|USERS" empty></data-table>`);
define('retention-chart', `
  :host{display:block;margin-top:14px}
  .g{padding-left:2px;display:flex;flex-direction:column;height:123px;justify-content:space-between}
  .g div{height:1px;background:linear-gradient(90deg,#f1f1f3 calc(100% - 18px),#fff calc(100% - 18px),#fff calc(100% - 15px),#f1f1f3 0);display:flex;justify-content:flex-end}
  .g span{font:6px/10px Inter;color:#3c4043}.g div:last-child{align-items:flex-end}
  .x{font:6px/6px Inter;text-align:center;padding:3px 8px 0 0}
  p{margin:6px 0 0;color:#202124;font:7px/10px Roboto}`,
  `<div class="g">${['1', '0.8', '0.6', '0.4', '0.2', '0'].map(n => `<div><span>${n}</span></div>`).join('')}</div><div class="x">17<br>Jul</div><p>Last 42 days ending Jul 16</p>`);
define('cohort-table', `
  :host{display:block}
  small{display:block;font:6px/10px Inter;color:#3c4043;margin-bottom:2px}
  table{width:100%;border-spacing:0;border-top:1px solid #e4e4e6;table-layout:fixed}
  th,td{padding:0;font:7px/16px Roboto;color:#202124;border-bottom:1px solid #e8e8ea;text-align:left;white-space:nowrap}
  thead th{font:500 6px/15px Inter;text-align:right;padding-right:3px}tbody tr:first-child td{text-align:right;padding-right:4px;line-height:17px}
  th:first-child{width:56px}td.f{background:#e0e0e0;background-clip:padding-box;border-right:1px solid #fff}
  p{margin:4px 0 -12px;color:#202124;font:7px/10px Roboto}`,
  `<small>Based on device data only</small><table><thead><tr><th></th>${[0, 1, 2, 3, 4, 5].map(n => `<th scope="col">Week ${n}</th>`).join('')}</tr></thead><tbody>
  <tr><th scope="row">All Users</th>${'<td>0.0%</td>'.repeat(6)}</tr>${['Jun 5 - Jun 11', 'Jun 12 - Jun 18', 'Jun 19 - Jun 25', 'Jun 26 - Jul 2', 'Jul 3 - Jul 9', 'Jul 10 - Jul 16'].map((w, i) => `<tr><th scope="row">${w}</th>${'<td class="f"></td>'.repeat(6 - i)}${'<td></td>'.repeat(i)}</tr>`).join('')}
  </tbody></table><p>6 weeks ending Jul 16</p>`);
define('report-grid', `
  :host{display:grid;grid-template-columns:repeat(29,minmax(0,1fr));grid-auto-rows:201px;gap:27px 8px}
  .w4{grid-column:span 4}.w5{grid-column:span 5}.w6{grid-column:span 6}.w7{grid-column:span 7}.w9{grid-column:span 9}
  .split{display:flex;gap:28px}`, `
  <ga-card class="w7" heading="User activity over time"><div class="split"><time-chart tight style="--line:#6352cf"></time-chart><day-legend></day-legend></div></ga-card>
  <ga-card class="w5" link="View realtime"><realtime-panel></realtime-panel></ga-card>
  <ga-card class="w7" metric="Users" menu heading="by App version" link="View app versions"><time-chart empty></time-chart></ga-card>
  <ga-card class="w6" heading="Latest app release overview"><data-table columns="APP|VERSION|STATUS" row="Ditonton|1.0.0|Successful"></data-table></ga-card>
  <ga-card class="w4" heading="App stability overview"><data-table columns="APP|CRASH-FREE USERS"></data-table></ga-card>
  <ga-card class="w9" tabs><metric-row fade><metric-tab on help label="Average engagement time" value="0m 00s"></metric-tab><metric-tab help label="Engaged sessions per user" value="0"></metric-tab><metric-tab label="Average engagement time p" value="0m 00s"></metric-tab></metric-row><time-chart short style="--line:#7cacf2"></time-chart></ga-card>
  <ga-card class="w6" metric="User retention"><retention-chart></retention-chart></ga-card>
  <ga-card class="w6" heading="User activity by cohort" link="View retention"><cohort-table></cohort-table></ga-card>
  <ga-card class="w4" metric="Views" heading="by Page title and screen class" link="View pages and screens"><data-table columns="PAGE TITLE AND S...|VIEWS" empty></data-table></ga-card>
  <ga-card class="w4" metric="Event count" heading="by Event name" link="View events"><data-table columns="EVENT NAME|EVENT COUNT" empty></data-table></ga-card>
  <ga-card class="w6" metric="Conversions" heading="by Event name"><data-table columns="EVENT NAME|CONVERSIONS"></data-table></ga-card>
  <ga-card class="w9" tabs><metric-row><metric-tab on help label="Total revenue" value="$0.00"></metric-tab><metric-tab help label="Ecommerce revenue" value="$0.00"></metric-tab><metric-tab label="Total ad revenue" value="$0.00"></metric-tab></metric-row></ga-card>
  <ga-card class="w9" tabs><metric-row><metric-tab on label="Average purchase revenue per user" value="$0.00"></metric-tab></metric-row></ga-card>
  <ga-card class="w5" metric="Publisher ad impressions" menu heading="by Ad unit"><data-table columns="AD UNIT|PUBLISHER AD IMPRESS..."></data-table></ga-card>`);

/* ---------- taskbar ---------- */
define('task-app', `
  :host{display:flex;width:44px;height:46px;justify-content:center;align-items:center;position:relative}
  button{width:38px;height:38px;border-radius:4px;display:grid;place-items:center;position:relative}
  :host([active]) button{background:#f1f5fc}:host([alert]) button{background:#fbe1e5}
  ui-icon{width:24px;height:24px}
  :host([run])::after{content:"";position:absolute;bottom:4px;left:19px;width:6px;height:3px;border-radius:2px;background:#7d828c}
  :host([active])::after{left:14px;width:16px;background:#0a74d1}:host([alert])::after{background:#c42b1c}
  .badge{position:absolute;right:-2px;top:0;min-width:16px;height:16px;border-radius:8px;font-size:11px;line-height:16px;text-align:center;color:#fff;background:var(--badge,#f04747)}
  .badge ui-icon{width:16px;height:16px}
  :host([alert]) .badge{border-radius:2px;height:12px;font-size:10px;line-height:12px;right:2px;top:4px}`,
  el => `<button aria-label="${attr(el, 'icon')}"><ui-icon name="${attr(el, 'icon')}"></ui-icon>${el.hasAttribute('portrait') ? '<span class="badge"><ui-icon name="portrait"></ui-icon></span>' : ''}${el.hasAttribute('badge') ? `<span class="badge">${attr(el, 'badge')}</span>` : ''}</button>`);
define('task-bar', `
  :host{display:grid;grid-template-columns:1fr auto 1fr;height:48px;background:linear-gradient(90deg,#e1eef6,#e2edf6 18%,#d4def7 30%,#d5def6 62%,#e2edf7 76%,#e1eef8);border-top:1px solid #ccd5e6;color:#1b1b1b;font-size:12px;line-height:16px;box-sizing:border-box}
  .w{display:flex;align-items:center;gap:8px;padding-left:20px;text-align:left}.w ui-icon{width:24px;height:24px}.w small{display:block;font-size:12px;color:#5b6067}
  .apps{display:flex;padding-left:1px}.tray{display:flex;align-items:center;justify-content:flex-end;padding-right:16px}
  .tray ui-icon{width:16px;height:16px}.tray .up{width:12px;height:12px}.tray button{display:flex}
  .tray .g{gap:10px;margin-right:16px;align-items:center}.tray .q{gap:8px;margin:0 14px 0 18px}.tray .clock{display:block;text-align:right;font:12px/16px Roboto}`, `
  <button class="w"><ui-icon name="weather"></ui-icon><span>86°F<small>Cloudy</small></span></button>
  <div class="apps">
    <task-app icon="windows"></task-app><task-app icon="tsearch"></task-app><task-app icon="taskview"></task-app><task-app icon="chat"></task-app><task-app icon="folder" run></task-app><task-app icon="ai"></task-app><task-app icon="ps"></task-app>
    <task-app icon="discord" run badge="9+"></task-app><task-app icon="chrome" run portrait></task-app><task-app icon="chrome" run active badge="M" style="--badge:#00503f"></task-app><task-app icon="chrome" run badge="M" style="--badge:#8d6e63"></task-app>
    <task-app icon="line"></task-app><task-app icon="studio" run></task-app><task-app icon="edge"></task-app><task-app icon="whatsapp" run badge="2" style="--badge:#f60000"></task-app><task-app icon="telegram" run alert badge="..99"></task-app><task-app icon="notes" run></task-app>
  </div>
  <div class="tray"><button class="g" aria-label="Hidden icons"><ui-icon class="up" name="up"></ui-icon><ui-icon name="onedrive"></ui-icon></button><button>IND</button><button class="q" aria-label="Quick settings"><ui-icon name="wifi"></ui-icon><ui-icon name="sound"></ui-icon><ui-icon name="battery"></ui-icon></button><button class="clock">14:24<br>17/07/2022</button></div>`);

define('desktop-shell', `
  :host{display:grid;grid-template-rows:auto auto minmax(0,1fr) auto;height:100vh}
  .app{display:flex;min-height:0;overflow:hidden;position:relative;background:#f8f9fb}
  main{flex:1;min-width:0;overflow:hidden;padding:9px 28px 0 148px}
  report-header{margin-bottom:31px}report-grid{margin-right:10px}
  .thumb{position:absolute;right:0;top:0;width:3px;height:58%;background:#c6c8cb}
  .fab{position:absolute;right:6px;bottom:23px;width:20px;height:20px;border-radius:50%;background:#fff;box-shadow:0 1px 3px #0005;display:grid;place-items:center;color:#3c4043}.fab ui-icon{width:12px;height:12px}`, `
  <browser-chrome></browser-chrome><ga-header></ga-header>
  <div class="app"><side-nav></side-nav><main><report-header></report-header><report-grid></report-grid></main><div class="thumb"></div><button class="fab" aria-label="Send feedback"><ui-icon name="feedback"></ui-icon></button></div>
  <task-bar></task-bar>`);
</script>
</body>
</html>
